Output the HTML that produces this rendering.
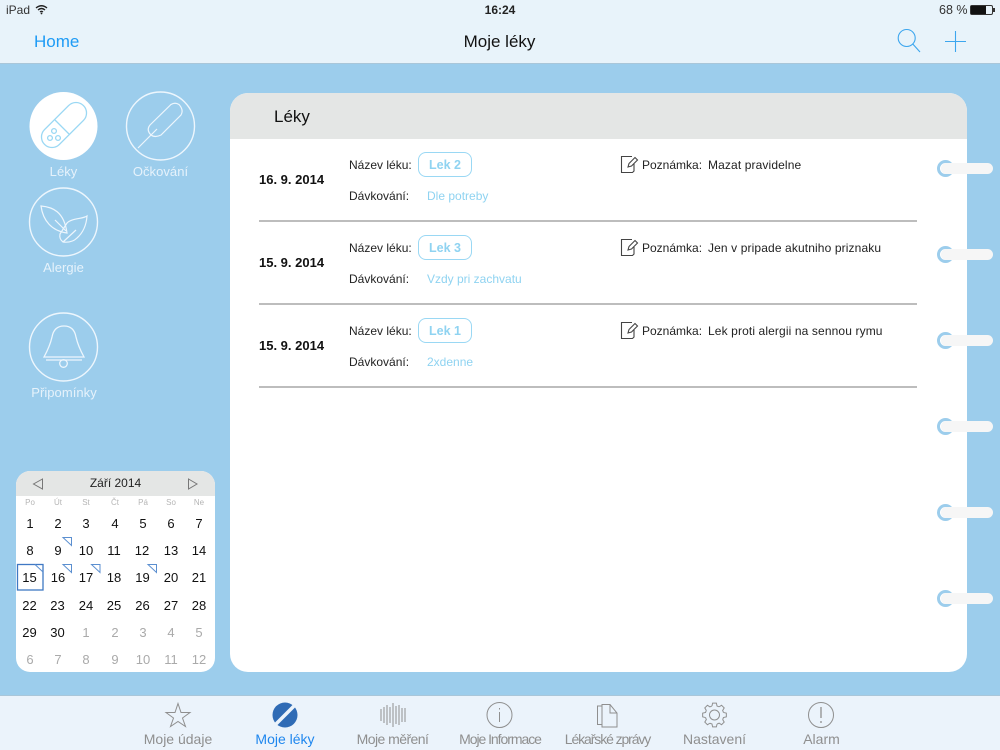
<!DOCTYPE html>
<html><head><meta charset="utf-8"><style>
*{box-sizing:border-box}
html,body{margin:0;padding:0}
body{width:1000px;height:750px;overflow:hidden;position:relative;background:#9ccdec;font-family:"Liberation Sans",sans-serif}
.a{position:absolute}
.t{position:absolute;white-space:nowrap;line-height:1}
.c{transform:translateX(-50%)}
.lab{color:#e6f2fb;font-size:13px;letter-spacing:.05px}
.tab{color:#8f8f8f;font-size:14px;top:732px}
.k{font-size:12px;color:#222;letter-spacing:0}
.m{font-size:12px;color:#222;letter-spacing:.12px}
.v{font-size:12px;color:#8fd3f1;letter-spacing:0}
.d{font-size:13px;font-weight:bold;color:#111;letter-spacing:0}
.hr{position:absolute;left:259px;width:658px;height:2px;background:#bdbdbd}
.pill{position:absolute;left:418px;width:54px;height:25px;border:1px solid #9ad8f4;border-radius:8px;color:#8fd3f1;font-size:12.5px;font-weight:bold;text-align:center;line-height:25px;background:#fff}
.n{font-size:13px;color:#111;transform:translateX(-50%)}
.g{color:#aaa}
.w{font-size:8px;color:#b5b5b5;transform:translateX(-50%)}
.ring{position:absolute;left:937px;width:17px;height:17px;border-radius:50%;border:3px solid #9ccdec;background:transparent}
.bar{position:absolute;left:941px;width:52px;height:11px;border-radius:6px;background:#f6f6f6}
</style></head><body>
<div class="a" style="left:0;top:0;width:1000px;height:64px;background:#e8f3fa;border-bottom:1px solid #a9c6d9"></div>
<span class="t" style="left:6px;top:4px;font-size:12px;color:#333">iPad</span>
<svg class="a" style="left:35px;top:4px" width="13" height="11" viewBox="0 0 13 11" fill="none" stroke="#222" stroke-width="1.4"><path d="M1 4Q6.500-.5 12 4M3 6Q6.500 3 10 6M5 8Q6.500 6.800 8 8"/><circle cx="6.500" cy="9.500" r=".9" fill="#222" stroke="none"/></svg>
<span class="t c" style="left:500px;top:4px;font-size:12px;font-weight:bold;color:#222">16:24</span>
<span class="t" style="left:939px;top:4px;font-size:12.5px;color:#333">68 %</span>
<div class="a" style="left:970px;top:5px;width:23px;height:10px;border:1px solid #333;border-radius:2px"><div style="width:15px;height:8px;background:#111"></div></div>
<div class="a" style="left:993px;top:8px;width:2px;height:4px;background:#333"></div>
<span class="t" style="left:34px;top:33px;font-size:17px;color:#1e9bf5">Home</span>
<span class="t c" style="left:499.500px;top:33px;font-size:17px;color:#111">Moje léky</span>
<svg class="a" style="left:895px;top:28px" width="75" height="26" fill="none" stroke="#3ca6ee" stroke-width="1.100"><circle cx="11.700" cy="10" r="8.500"/><path d="M17.800 16L25 24M50 13.500H71M60.500 3V24"/></svg>

<!-- side icons -->
<svg class="a" style="left:0;top:85px" width="220" height="320" fill="none" stroke="#edf6fd" stroke-width="1.400">
<circle cx="63.500" cy="41" r="34" fill="#fff" stroke="none"/>
<g stroke="#9ad8f4" stroke-width="1.300"><rect x="-27.500" y="-10.500" width="55" height="21" rx="10.500" transform="translate(64 40) rotate(-45)"/><path d="M55 35L69 49"/><circle cx="54" cy="46" r="2.400"/><circle cx="50" cy="53" r="2.400"/><circle cx="58" cy="53" r="2.400"/></g>
<circle cx="160.500" cy="41" r="34"/>
<path d="M150 40L171 19.500Q175 17 179 19.500Q184 25 181 30L161 50Q155 53 151 50Q146 45 150 40Z" stroke-width="1.200"/><path d="M138 63L157 44" stroke-width="1.200"/>
<circle cx="63.500" cy="137" r="34"/>
<g stroke-width="1.200"><path d="M41 121C52 122 64 126 67 148C52 146 43 136 41 121ZM55 135L66 146"/><path d="M87 131C83 134 72 133 67 138L60 149Q59 154 63 157Q72 158 77 153Q86 145 87 131ZM63 157L76 145"/></g>
<g transform="translate(0 124)"><circle cx="63.500" cy="138" r="34"/><path d="M44 148Q50 137 52 128Q54 117 64 117Q74 117 76 128Q78 137 84 148H44ZM46 151H82" stroke-width="1.300"/><circle cx="63.500" cy="154.500" r="3.800" stroke-width="1.300"/></g>
</svg>
<span class="t c lab" style="left:63.500px;top:165px">Léky</span>
<span class="t c lab" style="left:160.500px;top:165px">Očkování</span>
<span class="t c lab" style="left:63.500px;top:261px">Alergie</span>
<span class="t c lab" style="left:64px;top:386px">Připomínky</span>

<!-- panel -->
<div class="a" style="left:230px;top:93px;width:737px;height:579px;background:#fff;border-radius:18px;overflow:hidden"><div style="height:46px;background:#e4e6e5"></div></div>
<span class="t" style="left:274px;top:108px;font-size:17px;color:#111">Léky</span>

<span class="t d" style="left:259px;top:173px">16. 9. 2014</span>
<span class="t k" style="left:349px;top:159px">Název léku:</span>
<div class="pill" style="top:152px">Lek 2</div>
<span class="t k" style="left:349px;top:190px">Dávkování:</span>
<span class="t v" style="left:427px;top:190px">Dle potreby</span>
<span class="t k" style="left:642px;top:159px">Poznámka:</span>
<span class="t m" style="left:708px;top:159px">Mazat pravidelne</span>
<div class="hr" style="top:220px"></div>

<span class="t d" style="left:259px;top:256px">15. 9. 2014</span>
<span class="t k" style="left:349px;top:242px">Název léku:</span>
<div class="pill" style="top:235px">Lek 3</div>
<span class="t k" style="left:349px;top:273px">Dávkování:</span>
<span class="t v" style="left:427px;top:273px">Vzdy pri zachvatu</span>
<span class="t k" style="left:642px;top:242px">Poznámka:</span>
<span class="t m" style="left:708px;top:242px">Jen v pripade akutniho priznaku</span>
<div class="hr" style="top:303px"></div>

<span class="t d" style="left:259px;top:339px">15. 9. 2014</span>
<span class="t k" style="left:349px;top:325px">Název léku:</span>
<div class="pill" style="top:318px">Lek 1</div>
<span class="t k" style="left:349px;top:356px">Dávkování:</span>
<span class="t v" style="left:427px;top:356px">2xdenne</span>
<span class="t k" style="left:642px;top:325px">Poznámka:</span>
<span class="t m" style="left:708px;top:325px">Lek proti alergii na sennou rymu</span>
<div class="hr" style="top:386px"></div>

<svg class="a" style="left:620px;top:155px" width="20" height="240" fill="none" stroke="#444" stroke-width="1.100">
<g><path d="M12 1.500H1.500V17.500H12.500L14 16V9"/><path d="M8 12L9 8.500L15 2.500L17.500 5L11.500 11Z"/></g>
<g transform="translate(0 83)"><path d="M12 1.500H1.500V17.500H12.500L14 16V9"/><path d="M8 12L9 8.500L15 2.500L17.500 5L11.500 11Z"/></g>
<g transform="translate(0 166)"><path d="M12 1.500H1.500V17.500H12.500L14 16V9"/><path d="M8 12L9 8.500L15 2.500L17.500 5L11.500 11Z"/></g>
</svg>

<!-- rings -->
<div class="ring" style="top:160px"></div><div class="bar" style="top:163px"></div>
<div class="ring" style="top:246px"></div><div class="bar" style="top:249px"></div>
<div class="ring" style="top:332px"></div><div class="bar" style="top:335px"></div>
<div class="ring" style="top:418px"></div><div class="bar" style="top:421px"></div>
<div class="ring" style="top:504px"></div><div class="bar" style="top:507px"></div>
<div class="ring" style="top:590px"></div><div class="bar" style="top:593px"></div>

<!-- calendar -->
<div class="a" style="left:16px;top:471px;width:199px;height:201px;background:#fff;border-radius:14px;overflow:hidden"><div style="height:25px;background:#e4e6e5"></div></div>
<span class="t c" style="left:115.500px;top:477px;font-size:12px;color:#222">Září 2014</span>
<svg class="a" style="left:16px;top:471px" width="199" height="120" fill="none">
<path d="M26.500 8L17.500 13L26.500 18ZM172.500 8L181 13L172.500 18Z" stroke="#777" stroke-width="1"/>
<g stroke="#5b8fd0" stroke-width="1"><path d="M47 66.500H55.500V74.500ZM47 93.500H55.500V101.500ZM75.500 93.500H84V101.500ZM132 93.500H140.500V101.500Z"/></g>
<rect x="1.500" y="93.500" width="25.500" height="25.500" stroke="#3f78c4" stroke-width="1.300"/>
<path d="M19 93.500L27 101" stroke="#5b8fd0"/>
</svg>
<span class="t w" style="left:30px;top:499px">Po</span><span class="t w" style="left:58px;top:499px">Út</span><span class="t w" style="left:86px;top:499px">St</span><span class="t w" style="left:115px;top:499px">Čt</span><span class="t w" style="left:143px;top:499px">Pá</span><span class="t w" style="left:171px;top:499px">So</span><span class="t w" style="left:199px;top:499px">Ne</span>

<span class="t n" style="left:30px;top:517px">1</span><span class="t n" style="left:58px;top:517px">2</span><span class="t n" style="left:86px;top:517px">3</span><span class="t n" style="left:115px;top:517px">4</span><span class="t n" style="left:143px;top:517px">5</span><span class="t n" style="left:171px;top:517px">6</span><span class="t n" style="left:199px;top:517px">7</span>
<span class="t n" style="left:30px;top:544px">8</span><span class="t n" style="left:58px;top:544px">9</span><span class="t n" style="left:86px;top:544px">10</span><span class="t n" style="left:114px;top:544px">11</span><span class="t n" style="left:142px;top:544px">12</span><span class="t n" style="left:171px;top:544px">13</span><span class="t n" style="left:199px;top:544px">14</span>
<span class="t n" style="left:29.500px;top:571px">15</span><span class="t n" style="left:58px;top:571px">16</span><span class="t n" style="left:86px;top:571px">17</span><span class="t n" style="left:114px;top:571px">18</span><span class="t n" style="left:142.500px;top:571px">19</span><span class="t n" style="left:171px;top:571px">20</span><span class="t n" style="left:199px;top:571px">21</span>
<span class="t n" style="left:29.500px;top:599px">22</span><span class="t n" style="left:57.500px;top:599px">23</span><span class="t n" style="left:86px;top:599px">24</span><span class="t n" style="left:114px;top:599px">25</span><span class="t n" style="left:142.500px;top:599px">26</span><span class="t n" style="left:171px;top:599px">27</span><span class="t n" style="left:199px;top:599px">28</span>
<span class="t n" style="left:29.500px;top:626px">29</span><span class="t n" style="left:57.500px;top:626px">30</span><span class="t n g" style="left:86px;top:626px">1</span><span class="t n g" style="left:115px;top:626px">2</span><span class="t n g" style="left:143px;top:626px">3</span><span class="t n g" style="left:171px;top:626px">4</span><span class="t n g" style="left:199px;top:626px">5</span>
<span class="t n g" style="left:30px;top:653px">6</span><span class="t n g" style="left:58px;top:653px">7</span><span class="t n g" style="left:86px;top:653px">8</span><span class="t n g" style="left:115px;top:653px">9</span><span class="t n g" style="left:143px;top:653px">10</span><span class="t n g" style="left:171px;top:653px">11</span><span class="t n g" style="left:199px;top:653px">12</span>

<!-- tab bar -->
<div class="a" style="left:0;top:695px;width:1000px;height:55px;background:#ebf3fb;border-top:1px solid #a9c6d9"></div>
<svg class="a" style="left:0;top:700px" width="1000" height="30" fill="none" stroke="#8f8f8f" stroke-width="1">
<path d="M178 3.500L181 12.500H190L182.500 18L185.500 26.500L178 21.500L170.500 26.500L173.500 18L166 12.500H175Z"/>
<circle cx="285" cy="15" r="12.500" fill="#2f6bb5" stroke="none"/><path d="M274 26L296 4" stroke="#ebf3fb" stroke-width="3.500"/>
<path d="M381 9V21M384 7V23M387 5V25M390 7V23M393 3V27M396 6V24M399 5V25M402 8V22M405 8V22"/>
<circle cx="499.500" cy="15" r="12.500"/><path d="M499.500 12V22M499.500 8V9.500"/>
<path d="M602 4.500H610L617 13V27H602ZM610 4.500V13H617M602 6H597.500V24.500H602"/>
<circle cx="714.500" cy="15" r="5"/>
<g transform="translate(714.500 15)">
<path d="M-2.560 -8.940L-1.880 -11.850H1.880L2.560 -8.940A9.300 9.300 0 0 1 4.510 -8.130"/>
<path transform="rotate(45)" d="M-2.560 -8.940L-1.880 -11.850H1.880L2.560 -8.940A9.300 9.300 0 0 1 4.510 -8.130"/>
<path transform="rotate(90)" d="M-2.560 -8.940L-1.880 -11.850H1.880L2.560 -8.940A9.300 9.300 0 0 1 4.510 -8.130"/>
<path transform="rotate(135)" d="M-2.560 -8.940L-1.880 -11.850H1.880L2.560 -8.940A9.300 9.300 0 0 1 4.510 -8.130"/>
<path transform="rotate(180)" d="M-2.560 -8.940L-1.880 -11.850H1.880L2.560 -8.940A9.300 9.300 0 0 1 4.510 -8.130"/>
<path transform="rotate(225)" d="M-2.560 -8.940L-1.880 -11.850H1.880L2.560 -8.940A9.300 9.300 0 0 1 4.510 -8.130"/>
<path transform="rotate(270)" d="M-2.560 -8.940L-1.880 -11.850H1.880L2.560 -8.940A9.300 9.300 0 0 1 4.510 -8.130"/>
<path transform="rotate(315)" d="M-2.560 -8.940L-1.880 -11.850H1.880L2.560 -8.940A9.300 9.300 0 0 1 4.510 -8.130"/>
</g>
<circle cx="821" cy="15" r="12.500"/><path d="M821 7V18M821 21V23" stroke-width="1.300"/>
</svg>
<span class="t c tab" style="left:178px">Moje údaje</span>
<span class="t c tab" style="left:285px;color:#1e86ee">Moje léky</span>
<span class="t c tab" style="left:392.500px;letter-spacing:-.55px">Moje měření</span>
<span class="t c tab" style="left:500px;letter-spacing:-1.050px">Moje Informace</span>
<span class="t c tab" style="left:607.500px;letter-spacing:-1.100px">Lékařské zprávy</span>
<span class="t c tab" style="left:714.500px">Nastavení</span>
<span class="t c tab" style="left:821.500px">Alarm</span>
</body></html>
